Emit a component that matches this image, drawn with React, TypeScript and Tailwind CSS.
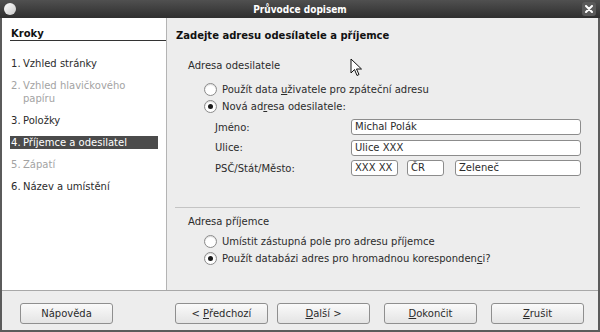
import React from 'react';

const font = { fontFamily: '"DejaVu Sans", "Liberation Sans", sans-serif' };

const Radio: React.FC<{ checked?: boolean; children: React.ReactNode }> = ({ checked, children }) => (
    <div className="flex items-center h-[17px]">
        <div className="w-[13px] h-[13px] rounded-full border border-[#8a8a8a] bg-white flex items-center justify-center shadow-[inset_0_1px_1px_rgba(0,0,0,0.15)]">
            {checked && <div className="w-[5px] h-[5px] rounded-full bg-[#1a1a1a]" />}
        </div>
        <span className="ml-[5px]">{children}</span>
    </div>
);

const Field: React.FC<{ value: string; className?: string }> = ({ value, className = '' }) => (
    <div className={`h-[16px] bg-white border border-[#8c8c8c] rounded-[3px] px-[3px] leading-[14px] whitespace-nowrap overflow-hidden ${className}`}>
        {value}
    </div>
);

const Btn: React.FC<{ children: React.ReactNode; className?: string }> = ({ children, className = '' }) => (
    <div className={`w-[93px] h-[21px] flex items-center justify-center rounded-[3px] border border-[#8f8f8f] bg-gradient-to-b from-[#fafafa] to-[#e4e4e4] ${className}`}>
        {children}
    </div>
);

const Step: React.FC<{ n: number; text: React.ReactNode; state?: 'on' | 'off' | 'sel' }> = ({ n, text, state = 'on' }) => {
    const cls = state === 'sel'
        ? 'bg-[#4b4b4b] text-white'
        : state === 'off' ? 'text-[#a3a3a3]' : 'text-[#2b2b2b]';
    return (
        <div className={`flex pl-[1px] pr-1 mr-[8px] leading-[13px] ${cls}`}>
            <span className="w-[12px] shrink-0">{n}.</span>
            <span>{text}</span>
        </div>
    );
};

const App: React.FC = () => {
    return (
        <div className="w-[600px] h-[332px] bg-[#5b5b5b] flex flex-col text-[10px] text-[#2b2b2b]" style={font}>
            {/* Title bar */}
            <div className="h-[18px] relative flex items-center justify-center bg-gradient-to-b from-[#505050] to-[#2f2f2f] text-white font-bold text-[10px] font-['DejaVu_Sans_Condensed','DejaVu_Sans',sans-serif]">
                <div className="absolute left-[4px] top-[3px] w-[12px] h-[12px] rounded-full bg-gradient-to-br from-white to-[#c8c8c8]" />
                Průvodce dopisem
                <div className="absolute right-[4px] top-[2px] w-[14px] h-[14px] rounded-[3px] bg-[#5a5a5a] flex items-center justify-center">
                    <svg width="8" height="8" viewBox="0 0 8 8">
                        <path d="M1 1 L7 7 M7 1 L1 7" stroke="white" strokeWidth="2" strokeLinecap="round" />
                    </svg>
                </div>
            </div>

            <div className="flex-1 mx-[2px] mb-[2px] bg-[#ededed] flex flex-col">
                <div className="flex h-[273px] border-b border-[#a8a8a8]">
                    {/* Steps */}
                    <div className="w-[165px] bg-white border-r border-[#b4b4b4] flex flex-col pl-[8px] pt-[10px]">
                        <div className="font-bold text-[#111] border-b border-[#333] w-[156px] leading-[12px] pl-[1px]">Kroky</div>
                        <div className="flex flex-col gap-[9px] mt-[16px]">
                            <Step n={1} text="Vzhled stránky" />
                            <Step n={2} text={<>Vzhled hlavičkového<br />papíru</>} state="off" />
                            <Step n={3} text="Položky" />
                            <Step n={4} text="Příjemce a odesilatel" state="sel" />
                            <Step n={5} text="Zápatí" state="off" />
                            <Step n={6} text="Název a umístění" />
                        </div>
                    </div>

                    {/* Main */}
                    <div className="flex-1 relative pl-[9px] pt-[12px] pr-[17px]">
                        <div className="font-bold text-[#111] leading-[12px]">Zadejte adresu odesílatele a příjemce</div>

                        <div className="pl-[12px] mt-[18px]">
                            <div className="leading-[12px]">Adresa odesilatele</div>
                            <div className="pl-[16px] mt-[9px]">
                                <Radio>Použít data <u>u</u>živatele pro zpáteční adresu</Radio>
                                <Radio checked>Nová ad<u>r</u>esa odesilatele:</Radio>
                                <div className="grid grid-cols-[136px_1fr] gap-y-[4.5px] items-center mt-[4px] pl-[11px]">
                                    <span>Jméno:</span>
                                    <Field value="Michal Polák" />
                                    <span>Ulice:</span>
                                    <Field value="Ulice XXX" />
                                    <span>PSČ/Stát/Město:</span>
                                    <div className="flex">
                                        <Field value="XXX XX" className="w-[47px]" />
                                        <Field value="ČR" className="w-[37px] ml-[9px]" />
                                        <Field value="Zeleneč" className="flex-1 ml-[11px]" />
                                    </div>
                                </div>
                            </div>
                        </div>

                        <div className="border-t border-[#c4c4c4] mt-[31px] -ml-[1px] mr-[1px]" />

                        <div className="pl-[12px] mt-[8px]">
                            <div className="leading-[12px]">Adresa příjemce</div>
                            <div className="pl-[16px] mt-[5px]">
                                <Radio>Umístit zástupná pole pro adresu příjemce</Radio>
                                <Radio checked>Použít databázi adres pro hromadnou koresponden<u>c</u>i?</Radio>
                            </div>
                        </div>

                        {/* Mouse pointer */}
                        <svg className="absolute left-[183px] top-[40px]" width="13" height="20" viewBox="0 0 13 20">
                            <path d="M1 1 L1 15 L4.5 11.5 L7 17.5 L9 16.5 L6.5 11 L11.5 11 Z" fill="white" stroke="#111" strokeWidth="1" strokeLinejoin="round" />
                        </svg>
                    </div>
                </div>

                {/* Buttons */}
                <div className="flex items-start pt-[12px] pl-[18px]">
                    <Btn>Nápověda</Btn>
                    <Btn className="ml-[62px]">&lt; <u className="ml-[3px]">P</u>ředchozí</Btn>
                    <Btn className="ml-[9px] border-[#6f6f6f]"><u>D</u>alší &gt;</Btn>
                    <Btn className="ml-[14px]"><u>D</u>okončit</Btn>
                    <Btn className="ml-[14px]"><u>Z</u>rušit</Btn>
                </div>
            </div>
        </div>
    );
};

export default App;
